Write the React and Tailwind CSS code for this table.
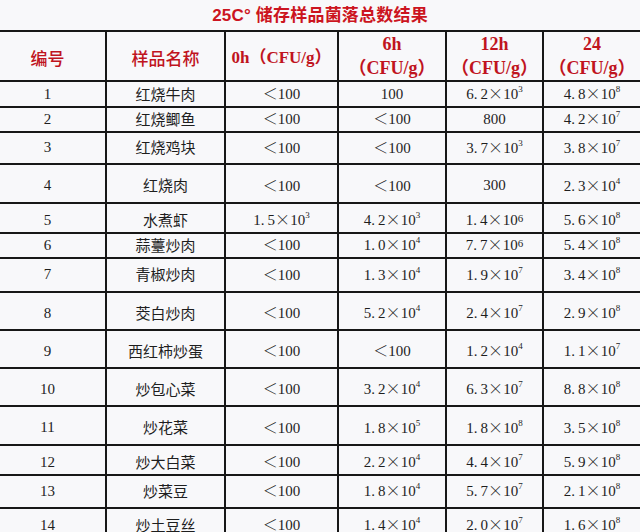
import React from "react";

const rows = [
  ["1", "红烧牛肉", "<", "100", "6.2e3", "4.8e8", "h-[25px]"],
  ["2", "红烧鲫鱼", "<", "<", "800", "4.2e7", "h-[25px]"],
  ["3", "红烧鸡块", "<", "<", "3.7e3", "3.8e7", "h-[37px]"],
  ["4", "红烧肉", "<", "<", "300", "2.3e4", "h-[39px]"],
  ["5", "水煮虾", "1.5e3", "4.2e3", "1.4E6", "5.6e8", "h-[25px]"],
  ["6", "蒜薹炒肉", "<", "1.0e4", "7.7E6", "5.4e8", "h-[25px]"],
  ["7", "青椒炒肉", "<", "1.3e4", "1.9e7", "3.4e8", "h-[39px]"],
  ["8", "茭白炒肉", "<", "5.2e4", "2.4e7", "2.9e8", "h-[38px]"],
  ["9", "西红柿炒蛋", "<", "<", "1.2e4", "1.1e7", "h-[38px]"],
  ["10", "炒包心菜", "<", "3.2e4", "6.3e7", "8.8e8", "h-[38px]"],
  ["11", "炒花菜", "<", "1.8e5", "1.8e8", "3.5e8", "h-[39px]"],
  ["12", "炒大白菜", "<", "2.2e4", "4.4e7", "5.9e8", "h-[25px]"],
  ["13", "炒菜豆", "<", "1.8e4", "5.7e7", "2.1e8", "h-[38px]"],
  ["14", "炒土豆丝", "<", "1.4e4", "2.0e7", "1.6e8", "h-[25px]"],
];

const serif = { fontFamily: '"Liberation Serif", "Noto Sans CJK SC", serif' };

function Value({ v }) {
  if (v === "<") {
    return (
      <span>
        <span className="font-['Noto_Sans_CJK_SC'] font-light">＜</span>100
      </span>
    );
  }
  const big = v.includes("E");
  if (v.includes("e") || big) {
    const [m, e] = v.split(/[eE]/);
    const [a, b] = m.split(".");
    return (
      <span className="whitespace-nowrap">
        {a}
        <span className="mr-[3px]">.</span>
        {b}
        <span className="font-['Noto_Sans_CJK_SC'] font-light">×</span>10
        {big ? (
          <sup className="text-[11px] top-[-3px]">{e}</sup>
        ) : (
          <sup className="text-[9px] top-[-7px]">{e}</sup>
        )}
      </span>
    );
  }
  return <span>{v}</span>;
}

const cols = "grid grid-cols-[107px_119px_113px_108px_97px_96px]";
const cell =
  "flex items-center justify-center border-b-2 border-r-2 border-[#171717]";
const lastCell = "flex items-center justify-center border-b-2 border-[#171717]";

export default function App() {
  return (
    <div className="w-[640px] h-[532px] overflow-hidden bg-[#f8f8fa]">
      <div className="h-[30px] flex items-center justify-center">
        <span className="text-[17px] font-bold text-[#cc1420] font-['Liberation_Sans','Noto_Sans_CJK_SC',sans-serif] leading-none tracking-[0.2px]">
          25C° 储存样品菌落总数结果
        </span>
      </div>
      <div className="border-t-2 border-[#171717]">
        <div className={`${cols} h-[46px] text-[#c0141e]`}>
          <div className={`${cell} pr-[10px] pt-[3px] text-[17px] font-medium font-['Noto_Sans_CJK_SC',sans-serif]`}>
            编号
          </div>
          <div className={`${cell} pt-[3px] text-[17px] font-medium font-['Noto_Sans_CJK_SC',sans-serif]`}>
            样品名称
          </div>
          <div className={`${cell} pt-[3px] text-[17px] font-bold whitespace-nowrap`} style={serif}>
            0h（CFU/g）
          </div>
          <div className={`${cell} flex-col leading-[24px] text-[18px] font-bold`} style={serif}>
            <span>6h</span>
            <span>（CFU/g）</span>
          </div>
          <div className={`${cell} flex-col leading-[24px] text-[18px] font-bold`} style={serif}>
            <span>12h</span>
            <span>（CFU/g）</span>
          </div>
          <div className={`${lastCell} flex-col leading-[24px] text-[18px] font-bold`} style={serif}>
            <span>24</span>
            <span>（CFU/g）</span>
          </div>
        </div>
        {rows.map((r) => (
          <div
            key={r[0]}
            className={`${cols} ${r[6]} text-[15px] text-[#1e1e1e]`}
            style={serif}
          >
            <div className={`${cell} pr-[10px] pt-[4px]`}>{r[0]}</div>
            <div className={`${cell} pt-[4px] font-['Noto_Sans_CJK_SC',sans-serif] font-normal`}>
              {r[1]}
            </div>
            <div className={`${cell} pt-[4px]`}>
              <Value v={r[2]} />
            </div>
            <div className={`${cell} pt-[4px]`}>
              <Value v={r[3]} />
            </div>
            <div className={`${cell} pt-[4px]`}>
              <Value v={r[4]} />
            </div>
            <div className={`${lastCell} pt-[4px]`}>
              <Value v={r[5]} />
            </div>
          </div>
        ))}
      </div>
    </div>
  );
}
